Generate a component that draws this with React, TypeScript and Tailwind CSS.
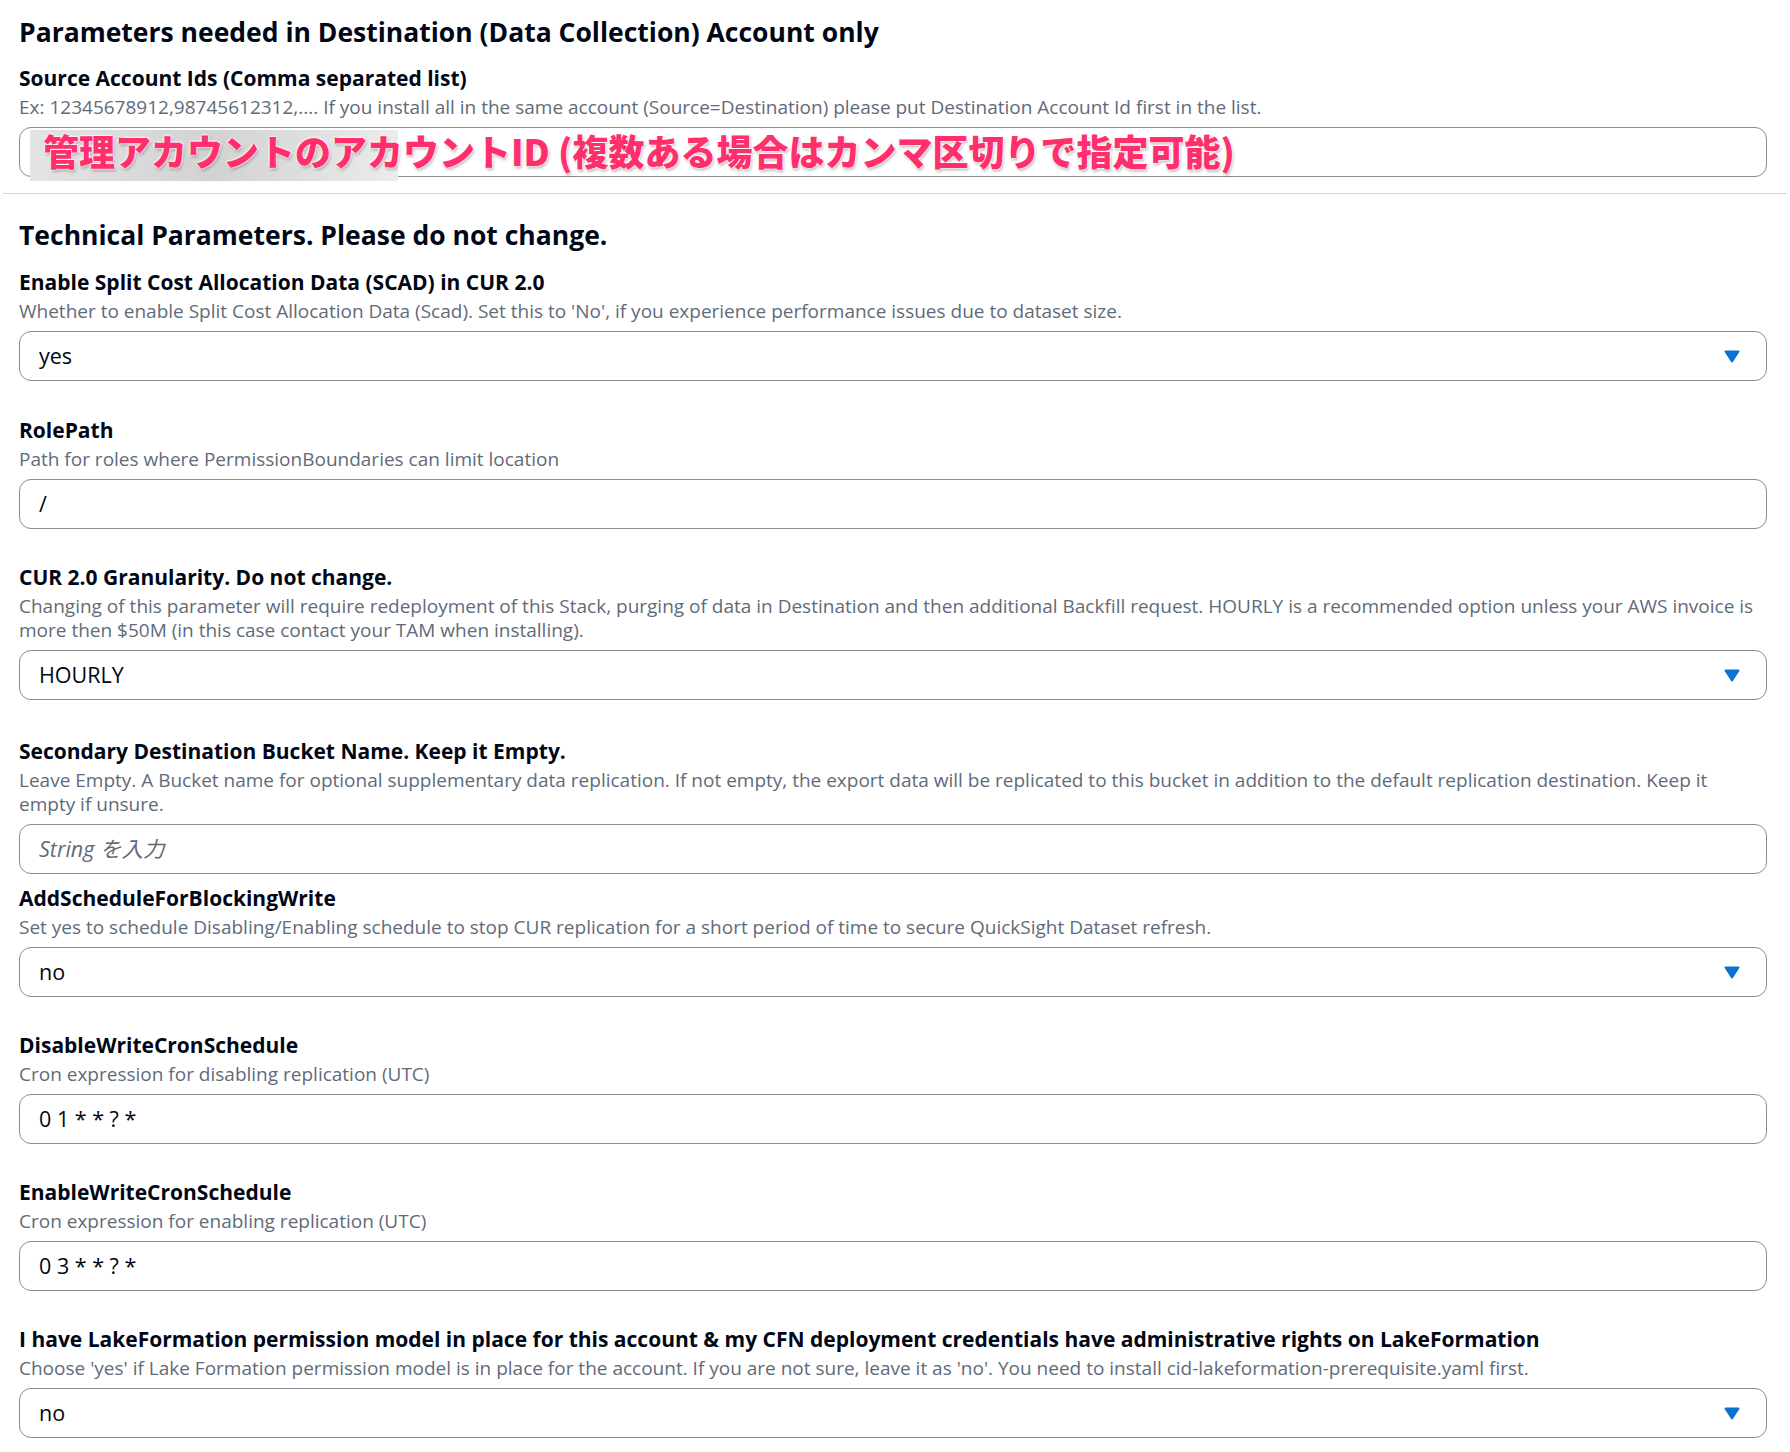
import React from "react";

type FieldProps = {
  label: string;
  desc: React.ReactNode;
  value?: string;
  placeholder?: string;
  select?: boolean;
  gap?: string;
};

const Caret = () => (
  <svg width="16" height="13" viewBox="0 0 16 13" className="shrink-0">
    <path d="M1.5 1.5 L14.5 1.5 L8 11.5 Z" fill="#0972d3" stroke="#0972d3" strokeWidth="2" strokeLinejoin="round" />
  </svg>
);

const Field = ({ label, desc, value, placeholder, select, gap = "mb-[35px]" }: FieldProps) => (
  <div className={gap}>
    <div className="text-[21px] leading-[26px] font-bold text-[#000716]">{label}</div>
    <div className="mt-[4px] text-[19px] leading-[24px] text-[#5f6b7a]">{desc}</div>
    <div className="mt-[8px] h-[50px] rounded-[12px] border-[1.5px] border-[#8c8c94] flex items-center pl-[19px] pr-[26px] bg-white">
      {value ? (
        <span className="flex-1 text-[21.5px] text-[#000716]">{value}</span>
      ) : (
        <span className="flex-1 text-[21.5px] italic text-[#5f6b7a]">{placeholder}</span>
      )}
      {select && <Caret />}
    </div>
  </div>
);

export default function App() {
  return (
    <div className="w-[1790px] min-h-[1452px] bg-white font-['Open_Sans','Noto_Sans_CJK_JP',sans-serif] text-[#000716]">
      <section className="pl-[19px] pr-[23px] pt-[16px] pb-[16px]">
        <h2 className="text-[26.5px] leading-[32px] font-bold">
          Parameters needed in Destination (Data Collection) Account only
        </h2>
        <div className="mt-[17px] text-[21px] leading-[26px] font-bold">Source Account Ids (Comma separated list)</div>
        <div className="mt-[4px] text-[19px] leading-[24px] text-[#5f6b7a]">
          Ex: 12345678912,98745612312,.... If you install all in the same account (Source=Destination) please put Destination
          Account Id first in the list.
        </div>
        <div className="relative mt-[8px] h-[50px] rounded-[12px] border-[1.5px] border-[#8c8c94] flex items-center pl-[23px]">
          <div className="absolute left-[10px] top-[2px] w-[368px] h-[51px] bg-gradient-to-r from-[#e4e4e4] via-[#d2d2d2] to-[#ececec]" />
          <span className="relative -mt-[4px] text-[36px] leading-[40px] font-black text-[#ff2f6d] font-['Noto_Sans_CJK_JP',sans-serif] [text-shadow:0_0_2px_#fff,0_0_2px_#fff,0_0_3px_#fff,1px_2px_3px_rgba(0,0,0,0.35)]">
            管理アカウントのアカウントID (複数ある場合はカンマ区切りで指定可能)
          </span>
        </div>
      </section>
      <div className="mx-[3px] h-px bg-[#d5d5d8]" />
      <section className="pl-[19px] pr-[23px] pt-[25px]">
        <h2 className="text-[26.5px] leading-[32px] font-bold mb-[18px]">Technical Parameters. Please do not change.</h2>
        <Field
          label="Enable Split Cost Allocation Data (SCAD) in CUR 2.0"
          desc="Whether to enable Split Cost Allocation Data (Scad). Set this to 'No', if you experience performance issues due to dataset size."
          value="yes"
          select
          gap="mb-[36px]"
        />
        <Field label="RolePath" desc="Path for roles where PermissionBoundaries can limit location" value="/" />
        <Field
          label="CUR 2.0 Granularity. Do not change."
          desc="Changing of this parameter will require redeployment of this Stack, purging of data in Destination and then additional Backfill request. HOURLY is a recommended option unless your AWS invoice is more then $50M (in this case contact your TAM when installing)."
          value="HOURLY"
          select
          gap="mb-[38px]"
        />
        <Field
          label="Secondary Destination Bucket Name. Keep it Empty."
          desc="Leave Empty. A Bucket name for optional supplementary data replication. If not empty, the export data will be replicated to this bucket in addition to the default replication destination. Keep it empty if unsure."
          placeholder="String を入力"
          gap="mb-[11px]"
        />
        <Field
          label="AddScheduleForBlockingWrite"
          desc="Set yes to schedule Disabling/Enabling schedule to stop CUR replication for a short period of time to secure QuickSight Dataset refresh."
          value="no"
          select
        />
        <Field label="DisableWriteCronSchedule" desc="Cron expression for disabling replication (UTC)" value="0 1 * * ? *" />
        <Field label="EnableWriteCronSchedule" desc="Cron expression for enabling replication (UTC)" value="0 3 * * ? *" />
        <Field
          label="I have LakeFormation permission model in place for this account & my CFN deployment credentials have administrative rights on LakeFormation"
          desc="Choose 'yes' if Lake Formation permission model is in place for the account. If you are not sure, leave it as 'no'. You need to install cid-lakeformation-prerequisite.yaml first."
          value="no"
          select
        />
      </section>
    </div>
  );
}
